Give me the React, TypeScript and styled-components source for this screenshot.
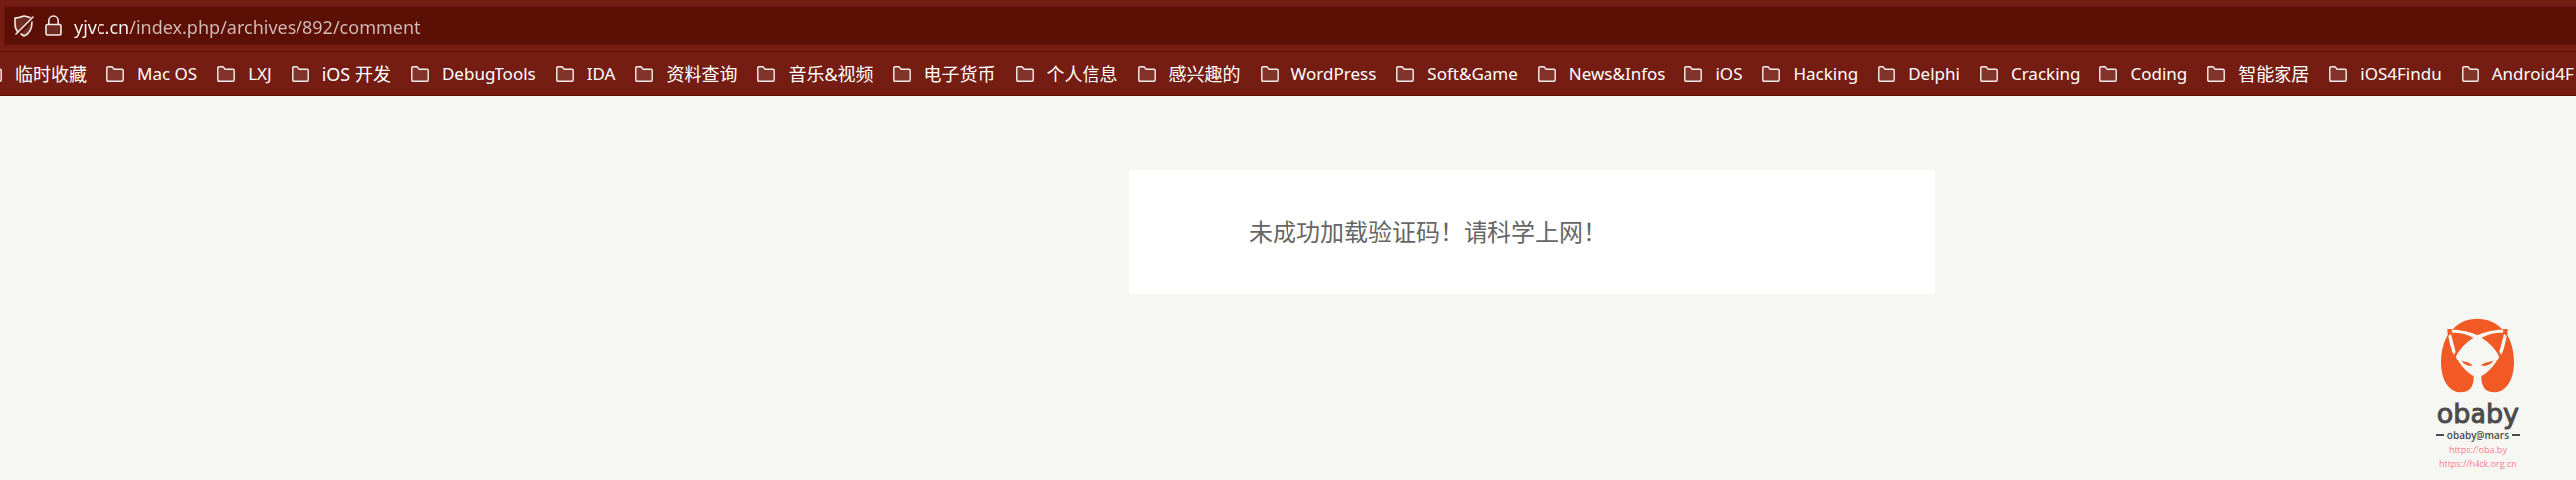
import React from "react";
import styled, { createGlobalStyle } from "styled-components";

const GlobalStyle = createGlobalStyle`
  * { box-sizing: border-box; }
  body { margin: 0; background: #f6f7f2; }
`;

const uiFont = `"Noto Sans", "Noto Sans CJK SC", sans-serif`;

const Page = styled.div`
  position: relative;
  display: flex;
  flex-direction: column;
  min-height: 100vh;
  overflow: hidden;
  font-family: ${uiFont};
`;

const Chrome = styled.header`
  background: #751d12;
  border-bottom: 1px solid #5c0f04;
`;

const AddressRow = styled.div`
  padding: 6px 0 6px 4px;
  border-bottom: 1px solid #5c0f04;
`;

const AddressBar = styled.label`
  display: flex;
  align-items: center;
  height: 39px;
  padding-left: 8px;
  background: #5c0f04;
  border: 1px solid #68140a;
  border-right: 0;
`;

const StatusIcon = styled.svg`
  flex: none;
  width: 22px;
  height: 24px;
  margin-right: 8px;
  fill: rgba(255, 255, 255, 0.12);
  stroke: #f3e9e7;
  stroke-width: 1.6;
  stroke-linejoin: round;
  stroke-linecap: round;
`;

const AddressInput = styled.input`
  flex: 1;
  min-width: 0;
  height: 34px;
  padding: 2px 0 0 1px;
  border: 0;
  outline: 0;
  font: 18px/32px ${uiFont};
  color: #d3bdba;
  caret-color: #ffffff;
  background: linear-gradient(to right, #ffffff 58px, #d3bdba 58px);
  background-clip: text;
  -webkit-background-clip: text;
  -webkit-text-fill-color: transparent;
`;

const Bookmarks = styled.nav`
  display: flex;
  gap: 20px;
  height: 43px;
  margin-left: -16px;
  overflow: hidden;
`;

const Bookmark = styled.button<{ $cjk: boolean }>`
  flex: none;
  display: flex;
  align-items: center;
  gap: 13px;
  padding: 0;
  border: 0;
  background: none;
  color: #ffffff;
  font: ${(p) => (p.$cjk ? 18 : 17)}px/24px ${uiFont};
  white-space: nowrap;
`;

const BookmarkIcon = styled.svg`
  flex: none;
  width: 18px;
  height: 16px;
  fill: rgba(255, 255, 255, 0.1);
  stroke: #f7efee;
  stroke-width: 1.4;
  stroke-linejoin: round;
`;

const Main = styled.main`
  display: grid;
  grid-template-columns: 1135fr minmax(auto, 810px) 644fr;
  padding-top: 75px;
`;

const Card = styled.section`
  grid-column: 2;
  padding: 41px 120px 43px;
  border-radius: 2px;
  background: #ffffff;
`;

const Message = styled.p`
  margin: 0;
  color: #666666;
  font: 24px/40px "Noto Sans CJK SC", sans-serif;
`;

const Watermark = styled.aside`
  position: absolute;
  right: 56px;
  bottom: 9px;
  display: flex;
  flex-direction: column;
  align-items: center;
  color: #4b4b4b;
`;

const Logo = styled.svg`
  width: 76px;
  height: 76px;
`;

const Brand = styled.strong`
  margin: 9px 0 3px;
  font: 27px/24px "DejaVu Sans", sans-serif;
  -webkit-text-stroke: 1px #4b4b4b;
`;

const Tagline = styled.span`
  display: flex;
  align-items: center;
  gap: 3px;
  margin-bottom: 2px;
  font: 600 10px/12px "Open Sans", sans-serif;

  &::before,
  &::after {
    content: "";
    width: 8px;
    height: 2px;
    background: #4b4b4b;
  }
`;

const SiteLink = styled.a`
  color: #ff7893;
  font: 9px/14px "Open Sans", sans-serif;
  text-decoration: none;
`;

const folders = [
  "临时收藏",
  "Mac OS",
  "LXJ",
  "iOS 开发",
  "DebugTools",
  "IDA",
  "资料查询",
  "音乐&视频",
  "电子货币",
  "个人信息",
  "感兴趣的",
  "WordPress",
  "Soft&Game",
  "News&Infos",
  "iOS",
  "Hacking",
  "Delphi",
  "Cracking",
  "Coding",
  "智能家居",
  "iOS4Findu",
  "Android4F",
];

const hasCjk = (text: string) => /[\u4e00-\u9fff]/.test(text);

const Shield = () => (
  <StatusIcon viewBox="0 0 22 24" aria-hidden="true">
    <path d="M17 3.5 C15 3 13 2 11 2 C8 3 5 4 2 4 V10 C2 13 3 16 5 18" />
    <path d="M19 8 C19 15 16 20 11 22 L8 20" />
    <path d="M20 3 L3 20" />
  </StatusIcon>
);

const Lock = () => (
  <StatusIcon viewBox="0 0 22 24" aria-hidden="true">
    <rect x="3" y="10.5" width="15" height="10.5" rx="1.5" />
    <path d="M5.8 10.5 V7 a4.7 5 0 0 1 9.4 0 V10.5" fill="none" />
  </StatusIcon>
);

const Folder = () => (
  <BookmarkIcon viewBox="0 0 18 16" aria-hidden="true">
    <path d="M.8 2 Q.8 .8 2 .8 H6 L8.2 3.2 H16 Q17.2 3.2 17.2 4.4 V14 Q17.2 15.2 16 15.2 H2 Q.8 15.2 .8 14 Z" />
  </BookmarkIcon>
);

const FoxLogo = () => (
  <Logo viewBox="70 55 228 228" role="img" aria-label="obaby">
    <path
      fill="#f15a24"
      d="M183 57 C215 57 241 69 259 88 L276 88 L275 106 C288 129 295 157 295 190 C295 245 270 281 236 281 C209 281 196 264 197 232 C215 224 240 198 250 173 C250 160 221 127 197 114 H171 C147 127 119 160 118 173 C128 198 153 224 171 232 C172 264 159 281 132 281 C98 281 73 245 73 190 C73 157 80 129 93 106 L92 88 L109 88 C127 69 151 57 183 57 Z"
    />
    <g fill="#f6f7f2">
      <path d="M105 90 C130 89 160 96 184 107 C208 96 238 89 263 90 L262 99 C240 98 216 103 197 115 H171 C152 103 128 98 106 99 Z" />
      <path d="M95 109 L103 103 L117 157 L111 165 C104 153 99 131 95 109 Z" />
      <path d="M273 109 L265 103 L251 157 L257 165 C264 153 269 131 273 109 Z" />
    </g>
    <path fill="#f15a24" d="M134 185 C146 192 159 189 167 201 C154 203 142 199 134 185 Z M234 185 C222 192 206 189 196 201 C212 203 226 199 234 185 Z" />
  </Logo>
);

export default function App() {
  return (
    <Page>
      <GlobalStyle />
      <Chrome>
        <AddressRow>
          <AddressBar>
            <Shield />
            <Lock />
            <AddressInput
              aria-label="Address"
              spellCheck={false}
              defaultValue="yjvc.cn/index.php/archives/892/comment"
            />
          </AddressBar>
        </AddressRow>
        <Bookmarks aria-label="Bookmarks">
          {folders.map((name) => (
            <Bookmark key={name} type="button" $cjk={hasCjk(name)}>
              <Folder />
              {name}
            </Bookmark>
          ))}
        </Bookmarks>
      </Chrome>
      <Main>
        <Card>
          <Message>未成功加载验证码！请科学上网！</Message>
        </Card>
      </Main>
      <Watermark>
        <FoxLogo />
        <Brand>obaby</Brand>
        <Tagline>obaby@mars</Tagline>
        <SiteLink href="https://oba.by">https://oba.by</SiteLink>
        <SiteLink href="https://h4ck.org.cn">https://h4ck.org.cn</SiteLink>
      </Watermark>
    </Page>
  );
}
